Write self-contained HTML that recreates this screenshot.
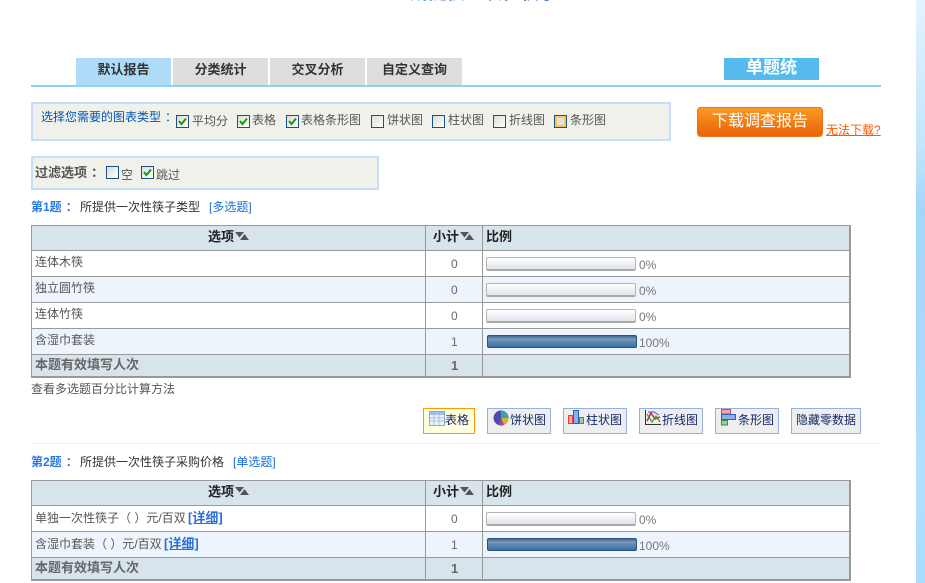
<!DOCTYPE html>
<html lang="zh">
<head>
<meta charset="utf-8">
<title>默认报告</title>
<style>
html,body{margin:0;padding:0;background:#fff;}
body{width:925px;height:583px;position:relative;overflow:hidden;font-family:"Liberation Sans","WenQuanYi Zen Hei","Noto Sans CJK SC",sans-serif;font-size:12px;color:#555;}
.a,.t,.cb,.bar,.btn{position:absolute;}
.t{white-space:nowrap;line-height:14px;}
.b{font-weight:bold;font-size:13px;}
.c{margin-left:4px;}
.tab{position:absolute;top:58px;width:95px;height:27px;background:#dddddd;color:#333;font-weight:bold;font-size:13px;text-align:center;line-height:24px;}
.cb{width:11px;height:11px;border:1px solid #1c5180;background:linear-gradient(135deg,#dcdcd7,#fff);}
.cb svg{position:absolute;left:1px;top:1px;}
.bar{width:148px;height:11px;border:1px solid #b4b4b4;border-bottom:2px solid #aaa;border-radius:2px;background:linear-gradient(#fff,#f2f4f8 40%,#dfe4ec);}
.bar.full{width:148px;height:11px;border:1px solid #2b5580;border-radius:2px;background:linear-gradient(#3d6a99,#7e9ab6 30%,#5f87ae 50%,#4c7fb5 75%,#3d6d9e);}
.btn{height:24px;top:408px;border:1px solid #94b1e2;background:#eeeeee;color:#14296a;line-height:22px;box-sizing:content-box;}
.btn span{position:absolute;white-space:nowrap;top:0;}
.btn svg{position:absolute;}
.tbl{position:absolute;left:31px;width:820px;}
.ln{position:absolute;background:#999;}
.arrow{position:absolute;width:14px;height:8px;}
</style>
</head>
<body>

<div class="t" style="left:410px;top:-16px;font-weight:bold;font-size:18px;line-height:18px;color:#0055b0;letter-spacing:.5px;">所提供一次性筷子</div>

<div class="a" style="left:916px;top:0;width:9px;height:583px;background:linear-gradient(#e4f3fd 0,#c4e5fa 25%,#a3d7f8 36%,#a8daf9 60%,#b4e0fb 80%,#acdcfa 100%);"></div>

<div class="tab" style="left:76px;background:#aedcf8;">默认报告</div>
<div class="tab" style="left:173px;">分类统计</div>
<div class="tab" style="left:270px;">交叉分析</div>
<div class="tab" style="left:367px;">自定义查询</div>
<div class="a" style="left:31px;top:85px;width:850px;height:2px;background:#90d0f6;"></div>
<div class="a" style="left:724px;top:58px;width:95px;height:22px;background:#55bbee;color:#fff;font-weight:bold;font-size:17px;line-height:20px;text-align:center;">单题统</div>

<div class="a" style="left:31px;top:102px;width:636px;height:35px;border:2px solid #c8dcfc;background:#f1f1ec;"></div>
<div class="t" style="left:41px;top:110px;color:#0055b0;">选择您需要的图表类型<span class="c">：</span></div>

<div class="cb" style="left:176px;top:115px;"><svg width="9" height="9" viewBox="0 0 9 9"><path d="M1 4l2.5 3L8 1.5" fill="none" stroke="#12a012" stroke-width="2"/></svg></div>
<div class="t" style="left:192px;top:114px;">平均分</div>
<div class="cb" style="left:237px;top:115px;"><svg width="9" height="9" viewBox="0 0 9 9"><path d="M1 4l2.5 3L8 1.5" fill="none" stroke="#12a012" stroke-width="2"/></svg></div>
<div class="t" style="left:252px;top:113px;">表格</div>
<div class="cb" style="left:286px;top:115px;"><svg width="9" height="9" viewBox="0 0 9 9"><path d="M1 4l2.5 3L8 1.5" fill="none" stroke="#12a012" stroke-width="2"/></svg></div>
<div class="t" style="left:301px;top:113px;">表格条形图</div>
<div class="cb" style="left:371px;top:115px;"></div>
<div class="t" style="left:387px;top:113px;">饼状图</div>
<div class="cb" style="left:432px;top:115px;"></div>
<div class="t" style="left:448px;top:113px;">柱状图</div>
<div class="cb" style="left:493px;top:115px;"></div>
<div class="t" style="left:509px;top:113px;">折线图</div>
<div class="cb" style="left:554px;top:115px;background:#e2e2de;box-shadow:inset 0 0 0 2px #fbc25e;"></div>
<div class="t" style="left:570px;top:113px;">条形图</div>

<div class="a" style="left:697px;top:107px;width:124px;height:28px;border:1px solid #e8761c;border-radius:4px;background:linear-gradient(#fb9a22,#ea6108);color:#fff;font-size:16px;line-height:27px;text-align:center;">下载调查报告</div>
<div class="t" style="left:826px;top:123px;color:#ff5a00;text-decoration:underline;">无法下载?</div>

<div class="a" style="left:31px;top:156px;width:344px;height:30px;border:2px solid #c8dcfc;background:#f1f1ec;"></div>
<div class="t b" style="left:35px;top:166px;">过滤选项<span class="c">：</span></div>
<div class="cb" style="left:106px;top:166px;"></div>
<div class="t" style="left:121px;top:168px;">空</div>
<div class="cb" style="left:141px;top:166px;"><svg width="9" height="9" viewBox="0 0 9 9"><path d="M1 4l2.5 3L8 1.5" fill="none" stroke="#12a012" stroke-width="2"/></svg></div>
<div class="t" style="left:156px;top:168px;">跳过</div>

<!-- Question 1 -->
<div class="t" style="left:31px;top:200px;color:#2a78e4;font-weight:bold;">第1题<span class="c">：</span></div>
<div class="t" style="left:80px;top:200px;color:#333;">所提供一次性筷子类型</div>
<div class="t" style="left:209px;top:200px;color:#1a6ee0;">[多选题]</div>

<div class="tbl" style="top:225px;height:153px;background:#fff;">
  <div class="a" style="left:0;top:0;width:820px;height:25px;background:#d8e4ec;"></div>
  <div class="a" style="left:0;top:52px;width:820px;height:26px;background:#edf4fc;"></div>
  <div class="a" style="left:0;top:104px;width:820px;height:25px;background:#edf4fc;"></div>
  <div class="a" style="left:0;top:130px;width:820px;height:22px;background:#d8e4ec;"></div>
  <div class="ln" style="left:0;top:0;width:820px;height:1px;"></div>
  <div class="ln" style="left:0;top:25px;width:820px;height:1px;"></div>
  <div class="ln" style="left:0;top:51px;width:820px;height:1px;"></div>
  <div class="ln" style="left:0;top:77px;width:820px;height:1px;"></div>
  <div class="ln" style="left:0;top:103px;width:820px;height:1px;"></div>
  <div class="ln" style="left:0;top:129px;width:820px;height:1px;"></div>
  <div class="ln" style="left:0;top:151px;width:820px;height:2px;"></div>
  <div class="ln" style="left:0;top:0;width:1px;height:153px;"></div>
  <div class="ln" style="left:394px;top:0;width:1px;height:153px;"></div>
  <div class="ln" style="left:451px;top:0;width:1px;height:153px;"></div>
  <div class="ln" style="left:818px;top:0;width:2px;height:153px;"></div>
</div>
<div class="t b" style="left:208px;top:230px;color:#222;">选项</div>
<svg class="arrow" style="left:235px;top:232px;" viewBox="0 0 14 8"><path d="M0 0h9L4.500 5.500zM14 8H5L9.500 2z" fill="#555"/></svg>
<div class="t b" style="left:433px;top:230px;color:#222;">小计</div>
<svg class="arrow" style="left:460px;top:232px;" viewBox="0 0 14 8"><path d="M0 0h9L4.500 5.500zM14 8H5L9.500 2z" fill="#555"/></svg>
<div class="t b" style="left:486px;top:230px;color:#222;">比例</div>

<div class="t" style="left:35px;top:255px;">连体木筷</div>
<div class="t" style="left:35px;top:281px;">独立圆竹筷</div>
<div class="t" style="left:35px;top:307px;">连体竹筷</div>
<div class="t" style="left:35px;top:333px;">含湿巾套装</div>
<div class="t b" style="left:35px;top:358px;color:#666;">本题有效填写人次</div>

<div class="t" style="left:451px;top:257px;color:#667;">0</div>
<div class="t" style="left:451px;top:283px;color:#667;">0</div>
<div class="t" style="left:451px;top:309px;color:#667;">0</div>
<div class="t" style="left:451px;top:335px;color:#667;">1</div>
<div class="t b" style="left:451px;top:359px;color:#666;">1</div>

<div class="bar" style="left:486px;top:257px;"></div><div class="t" style="left:639px;top:258px;color:#777;">0%</div>
<div class="bar" style="left:486px;top:283px;"></div><div class="t" style="left:639px;top:284px;color:#777;">0%</div>
<div class="bar" style="left:486px;top:309px;"></div><div class="t" style="left:639px;top:310px;color:#777;">0%</div>
<div class="bar full" style="left:487px;top:335px;"></div><div class="t" style="left:639px;top:336px;color:#777;">100%</div>

<div class="t" style="left:31px;top:382px;">查看多选题百分比计算方法</div>

<!-- Buttons -->
<div class="btn" style="left:423px;width:50px;border-color:#ff9a00;background:#ffffe0;">
  <svg style="left:5px;top:2px;" width="16" height="15" viewBox="0 0 16 15"><rect x=".5" y=".5" width="15" height="14" fill="#eef3fb" stroke="#8aa8d8"/><rect x="1" y="1" width="14" height="3" fill="#9fc0ea"/><path d="M1 7h14M1 10h14M5 4v10M10 4v10" stroke="#a8bfe0"/></svg>
  <span style="left:21px;">表格</span>
</div>
<div class="btn" style="left:487px;width:62px;">
  <svg style="left:5px;top:1px;" width="16" height="16" viewBox="0 0 16 16"><circle cx="8" cy="8" r="7.500" fill="#4c4cb0"/><path d="M8 8V.5A7.500 7.500 0 0 1 15.500 8z" fill="#3d9fa8"/><path d="M8 8h7.500A7.500 7.500 0 0 1 11 15z" fill="#d8b030"/><path d="M8 8l3 7a7.500 7.500 0 0 1-5 .3z" fill="#a048b0"/></svg>
  <span style="left:22px;">饼状图</span>
</div>
<div class="btn" style="left:563px;width:62px;">
  <svg style="left:4px;top:1px;" width="17" height="15" viewBox="0 0 17 15"><rect x=".5" y="5.500" width="4" height="8" fill="#fca0a0" stroke="#e84040"/><rect x="5.500" y=".5" width="5" height="13" fill="#88b0ec" stroke="#2860c8"/><rect x="11.500" y="7.500" width="4" height="6" fill="#a0d0a0" stroke="#409040"/></svg>
  <span style="left:22px;">柱状图</span>
</div>
<div class="btn" style="left:639px;width:62px;">
  <svg style="left:5px;top:1px;" width="16" height="15" viewBox="0 0 16 15"><path d="M.5 0v14.500H16" fill="none" stroke="#333"/><path d="M2 11L6 3l4 6 5-2" fill="none" stroke="#e02020" stroke-width="1.500"/><path d="M2 4l5 8 4-6 4 6" fill="none" stroke="#30a040" stroke-width="1.200"/><path d="M3 2h6l5 3" fill="none" stroke="#2060d0"/></svg>
  <span style="left:22px;">折线图</span>
</div>
<div class="btn" style="left:715px;width:62px;">
  <svg style="left:5px;top:0;" width="15" height="17" viewBox="0 0 15 17"><rect x=".5" y=".5" width="9" height="4.500" fill="#fca0a0" stroke="#e84040"/><rect x=".5" y="5.500" width="14" height="5" fill="#88b0ec" stroke="#2860c8"/><rect x=".5" y="11.500" width="6" height="4.500" fill="#a0d0a0" stroke="#409040"/></svg>
  <span style="left:22px;">条形图</span>
</div>
<div class="btn" style="left:791px;width:68px;">
  <span style="left:4px;">隐藏零数据</span>
</div>

<div class="a" style="left:31px;top:443px;width:850px;height:1px;background:#eeeef6;"></div>

<!-- Question 2 -->
<div class="t" style="left:31px;top:455px;color:#2a78e4;font-weight:bold;">第2题<span class="c">：</span></div>
<div class="t" style="left:80px;top:455px;color:#333;">所提供一次性筷子采购价格</div>
<div class="t" style="left:233px;top:455px;color:#1a6ee0;">[单选题]</div>

<div class="tbl" style="top:480px;height:103px;background:#fff;">
  <div class="a" style="left:0;top:0;width:820px;height:25px;background:#d8e4ec;"></div>
  <div class="a" style="left:0;top:52px;width:820px;height:25px;background:#edf4fc;"></div>
  <div class="a" style="left:0;top:78px;width:820px;height:22px;background:#d8e4ec;"></div>
  <div class="ln" style="left:0;top:0;width:820px;height:1px;"></div>
  <div class="ln" style="left:0;top:25px;width:820px;height:1px;"></div>
  <div class="ln" style="left:0;top:51px;width:820px;height:1px;"></div>
  <div class="ln" style="left:0;top:77px;width:820px;height:1px;"></div>
  <div class="ln" style="left:0;top:99px;width:820px;height:2px;"></div>
  <div class="ln" style="left:0;top:0;width:1px;height:101px;"></div>
  <div class="ln" style="left:394px;top:0;width:1px;height:101px;"></div>
  <div class="ln" style="left:451px;top:0;width:1px;height:101px;"></div>
  <div class="ln" style="left:818px;top:0;width:2px;height:101px;"></div>
</div>
<div class="t b" style="left:208px;top:485px;color:#222;">选项</div>
<svg class="arrow" style="left:235px;top:487px;" viewBox="0 0 14 8"><path d="M0 0h9L4.500 5.500zM14 8H5L9.500 2z" fill="#555"/></svg>
<div class="t b" style="left:433px;top:485px;color:#222;">小计</div>
<svg class="arrow" style="left:460px;top:487px;" viewBox="0 0 14 8"><path d="M0 0h9L4.500 5.500zM14 8H5L9.500 2z" fill="#555"/></svg>
<div class="t b" style="left:486px;top:485px;color:#222;">比例</div>

<div class="t" style="left:35px;top:511px;">单独一次性筷子（ ）元/百双</div>
<div class="t b" style="left:188px;top:511px;color:#2a70d8;text-decoration:underline;">[详细]</div>
<div class="t" style="left:35px;top:537px;">含湿巾套装（ ）元/百双</div>
<div class="t b" style="left:164px;top:537px;color:#2a70d8;text-decoration:underline;">[详细]</div>
<div class="t b" style="left:35px;top:561px;color:#666;">本题有效填写人次</div>

<div class="t" style="left:451px;top:512px;color:#667;">0</div>
<div class="t" style="left:451px;top:538px;color:#667;">1</div>
<div class="t b" style="left:451px;top:562px;color:#666;">1</div>

<div class="bar" style="left:486px;top:512px;"></div><div class="t" style="left:639px;top:513px;color:#777;">0%</div>
<div class="bar full" style="left:487px;top:538px;"></div><div class="t" style="left:639px;top:539px;color:#777;">100%</div>

</body>
</html>
